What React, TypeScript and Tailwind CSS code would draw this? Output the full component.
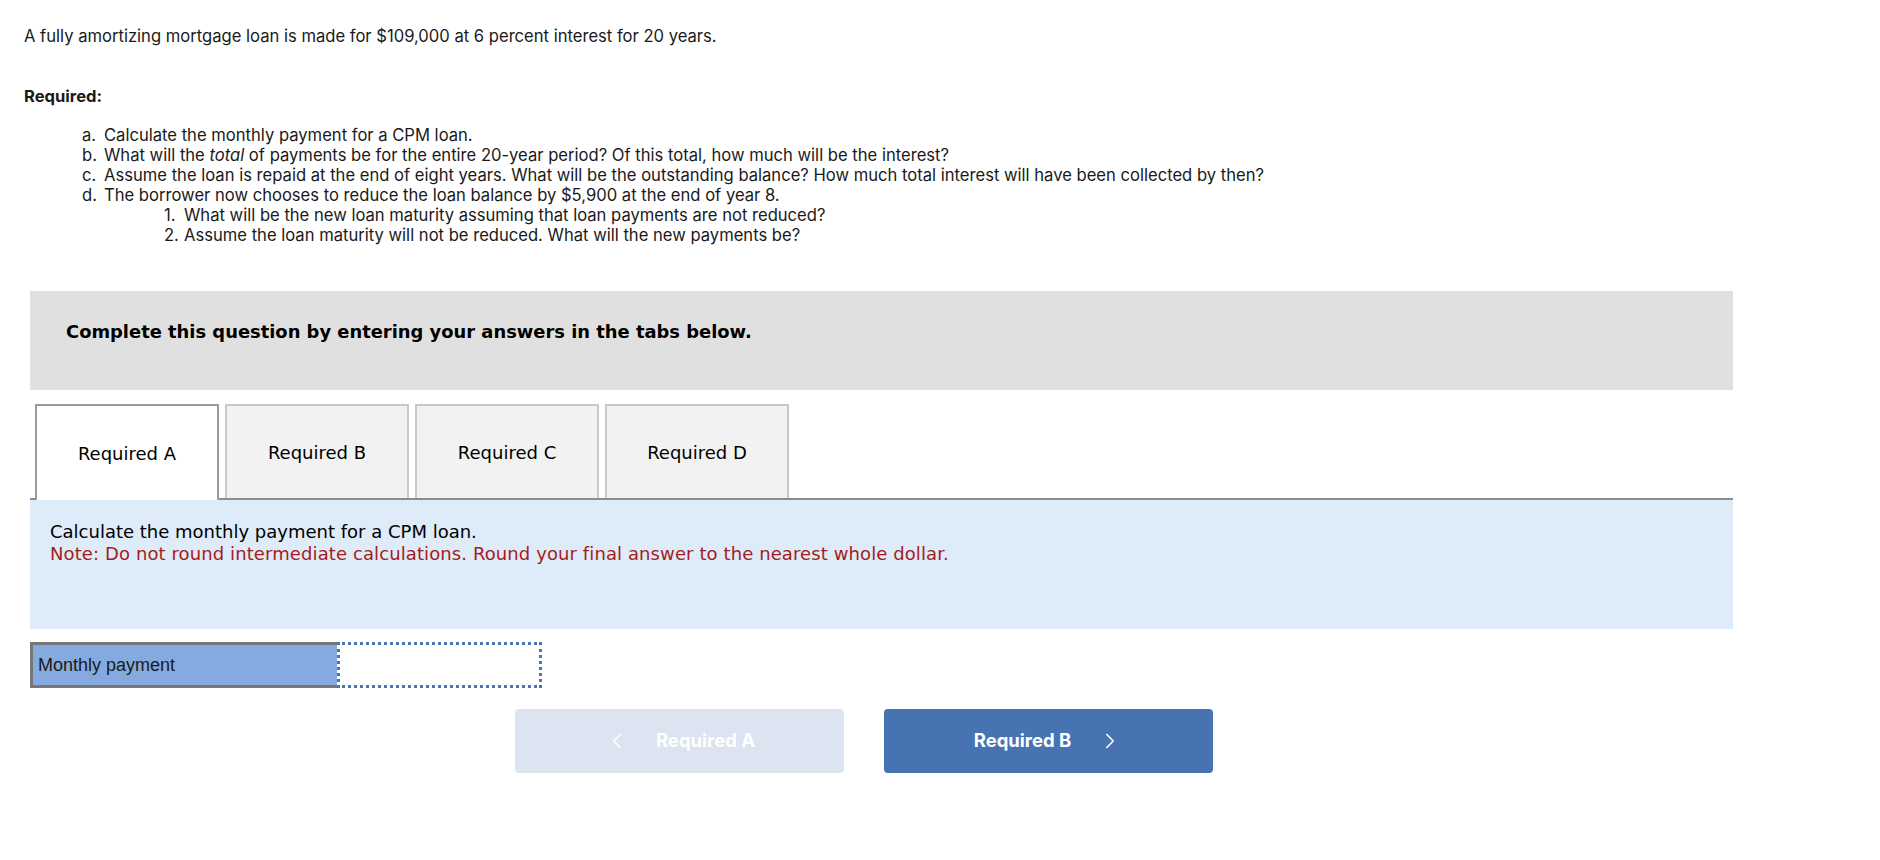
import React from "react";
import { ChevronLeft, ChevronRight } from "lucide-react";

const tabs = ["Required A", "Required B", "Required C", "Required D"];

export default function App() {
    return (
        <div className="min-h-screen bg-white px-6 pt-[26px] font-['Inter',sans-serif] text-[16.6px] text-[#1a1a1a]">
            <p className="leading-5">
                A fully amortizing mortgage loan is made for $109,000 at 6 percent interest for 20 years.
            </p>

            <p className="mt-10 font-bold leading-5">Required:</p>

            {/* list of questions */}
            <div className="mt-[19px] leading-5">
                <div className="flex pl-[58px]">
                    <span className="w-[22px]">a.</span>
                    <span>Calculate the monthly payment for a CPM loan.</span>
                </div>
                <div className="flex pl-[58px]">
                    <span className="w-[22px]">b.</span>
                    <span>
                        What will the <i>total</i> of payments be for the entire 20-year period? Of this total, how much will be the interest?
                    </span>
                </div>
                <div className="flex pl-[58px]">
                    <span className="w-[22px]">c.</span>
                    <span>
                        Assume the loan is repaid at the end of eight years. What will be the outstanding balance? How much total interest will have been collected by then?
                    </span>
                </div>
                <div className="flex pl-[58px]">
                    <span className="w-[22px]">d.</span>
                    <span>The borrower now chooses to reduce the loan balance by $5,900 at the end of year 8.</span>
                </div>
                <div className="flex pl-[140px]">
                    <span className="w-[20px]">1.</span>
                    <span>What will be the new loan maturity assuming that loan payments are not reduced?</span>
                </div>
                <div className="flex pl-[140px]">
                    <span className="w-[20px]">2.</span>
                    <span>Assume the loan maturity will not be reduced. What will the new payments be?</span>
                </div>
            </div>

            <div className="ml-[6px] w-[1703px]">
                {/* instruction box */}
                <div className="mt-[46px] h-[99px] bg-[#e0e0e0] pl-[36px] pt-[29px]">
                    <p className="font-['DejaVu_Sans',sans-serif] text-[17.9px] font-bold leading-6 text-black">
                        Complete this question by entering your answers in the tabs below.
                    </p>
                </div>

                {/* tabs */}
                <div className="mt-[14px] flex gap-[6px] border-b-2 border-[#8c8c8c] pl-[5px]">
                    {tabs.map((t, i) =>
                        i === 0 ? (
                            <div
                                key={t}
                                className="-mb-[2px] flex h-[96px] w-[184px] items-center justify-center border-2 border-b-0 border-[#9a9a9a] bg-white font-['DejaVu_Sans',sans-serif] text-[18px] text-black"
                            >
                                {t}
                            </div>
                        ) : (
                            <div
                                key={t}
                                className="flex h-[94px] w-[184px] items-center justify-center border-2 border-b-0 border-[#c8c8c8] bg-[#f2f2f2] font-['DejaVu_Sans',sans-serif] text-[18px] text-black"
                            >
                                {t}
                            </div>
                        )
                    )}
                </div>

                {/* question panel */}
                <div className="h-[129px] bg-[#deebf8] pl-5 pt-[21px] font-['DejaVu_Sans',sans-serif] text-[18px] leading-[22px]">
                    <p className="text-black">Calculate the monthly payment for a CPM loan.</p>
                    <p className="tracking-[0.1px] text-[#a51c1c]">
                        Note: Do not round intermediate calculations. Round your final answer to the nearest whole dollar.
                    </p>
                </div>

                {/* answer row */}
                <div className="mt-[13px] flex h-[46px] w-[512px]">
                    <div className="flex w-[307px] shrink-0 items-center border-[3px] border-r-0 border-[#777777] bg-[#84aae0] pl-[5px] font-['Liberation_Sans',sans-serif] text-[18px] text-[#1a1a1a]">
                        Monthly payment
                    </div>
                    <input
                        type="text"
                        className="h-full min-w-0 flex-1 border-[3px] border-dotted border-[#4a74b4] bg-white px-2 outline-none"
                    />
                </div>

                {/* navigation buttons */}
                <div className="mt-[21px] flex gap-[40px] pl-[485px]">
                    <button className="flex h-[64px] w-[329px] items-center justify-center gap-[26px] rounded-[4px] bg-[#dbe4f0] font-['Inter',sans-serif] text-[18.5px] font-bold text-white">
                        <ChevronLeft size={26} strokeWidth={1.5} />
                        Required A
                    </button>
                    <button className="flex h-[64px] w-[329px] items-center justify-center gap-[26px] rounded-[4px] bg-[#4873b2] font-['Inter',sans-serif] text-[18.5px] font-bold text-white">
                        Required B
                        <ChevronRight size={26} strokeWidth={1.5} />
                    </button>
                </div>
            </div>
        </div>
    );
}
